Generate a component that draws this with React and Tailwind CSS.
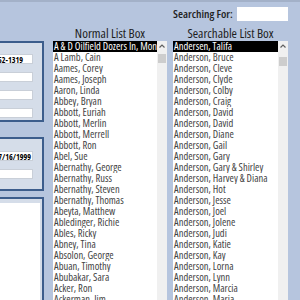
import React from "react";

const normalRows = [
	"A & D Oilfield Dozers In, Montana",
	"A Lamb, Cain",
	"Aames, Corey",
	"Aames, Joseph",
	"Aaron, Linda",
	"Abbey, Bryan",
	"Abbott, Euriah",
	"Abbott, Merlin",
	"Abbott, Merrell",
	"Abbott, Ron",
	"Abel, Sue",
	"Abernathy, George",
	"Abernathy, Russ",
	"Abernathy, Steven",
	"Abernathy, Thomas",
	"Abeyta, Matthew",
	"Abledinger, Richie",
	"Ables, Ricky",
	"Abney, Tina",
	"Absolon, George",
	"Abuan, Timothy",
	"Abubakar, Sara",
	"Acker, Ron",
	"Ackerman, Jim",
];

const searchRows = [
	"Andersen, Talifa",
	"Anderson, Bruce",
	"Anderson, Cleve",
	"Anderson, Clyde",
	"Anderson, Colby",
	"Anderson, Craig",
	"Anderson, David",
	"Anderson, David",
	"Anderson, Diane",
	"Anderson, Gail",
	"Anderson, Gary",
	"Anderson, Gary & Shirley",
	"Anderson, Harvey & Diana",
	"Anderson, Hot",
	"Anderson, Jesse",
	"Anderson, Joel",
	"Anderson, Jolene",
	"Anderson, Judi",
	"Anderson, Katie",
	"Anderson, Kay",
	"Anderson, Lorna",
	"Anderson, Lynn",
	"Anderson, Marcia",
	"Anderson, Maria",
];

const TextBox = ({ value, pad }) => (
	<div className={`ml-auto mr-[9px] w-[44px] h-[10px] bg-white border border-[#c9cfd8] overflow-hidden flex justify-end items-center ${pad}`}>
		<span className="whitespace-nowrap font-bold font-stretch-condensed text-[8px] leading-[9px] text-black">{value}</span>
	</div>
);

const ListBox = ({ rows, thumbTop }) => (
	<div className="flex h-[259px] bg-white">
		<div className="flex-1 min-w-0 overflow-hidden font-stretch-semi-condensed">
			{rows.map((row, i) => (
				<div
					key={i}
					className={`h-[11px] pl-[1px] whitespace-nowrap overflow-hidden text-[10.5px] leading-[11px] ${
						i === 0 ? "bg-black text-white" : "text-[#434343]"
					}`}>
					{row}
				</div>
			))}
		</div>
		<div className="w-[10px] bg-[#f0f0f0] flex flex-col items-center">
			<svg width="8" height="8" viewBox="0 0 8 8" className="mt-[1px]">
				<path d="M1.5 5.5 L4 3 L6.5 5.5" stroke="#606060" strokeWidth="1.2" fill="none" />
			</svg>
			<div className={`w-[8px] h-[9px] bg-[#cdcdcd] ${thumbTop}`} />
		</div>
	</div>
);

export default function App() {
	return (
		<div className="w-[300px] h-[300px] overflow-hidden bg-[#b6c5de] border-t-2 border-[#a3b1c8] flex items-start font-['Open_Sans',sans-serif]">
			{/* left forms */}
			<div className="w-[47px] shrink-0 pt-[39px] flex flex-col">
				<div className="-ml-[18px] w-[62px] h-[81px] border-2 border-[#3c5d8c] bg-[#d5dde9] pt-[11px] flex flex-col gap-[8px]">
					<TextBox value="(555) 552-1319" pad="pr-[9px]" />
					<TextBox value="" />
					<TextBox value="" />
					<TextBox value="" />
				</div>
				<div className="-ml-[18px] mt-[15px] w-[62px] h-[54px] border-2 border-[#3c5d8c] bg-[#d5dde9] pt-[12px] flex flex-col gap-[8px]">
					<TextBox value="7/16/1999" pad="pr-[1px]" />
					<TextBox value="" />
				</div>
				<div className="-ml-[18px] mt-[6px] w-[62px] h-[120px] border-2 border-[#3c5d8c] bg-[#d5dde9] pt-[4px]">
					<div className="ml-auto mr-[2px] w-[56px] h-[110px] bg-white" />
				</div>
			</div>

			{/* normal list */}
			<div className="ml-[6px] w-[114px] shrink-0 pt-[24px] flex flex-col">
				<div className="h-[15px] text-center text-[13px] leading-[15px] font-stretch-semi-condensed text-[#1d1d1d]">Normal List Box</div>
				<ListBox rows={normalRows} thumbTop="mt-[4px]" />
			</div>

			{/* searchable list */}
			<div className="ml-[6px] w-[115px] shrink-0 flex flex-col">
				<div className="mt-[5px] h-[14px] flex items-center justify-end">
					<span className="whitespace-nowrap text-[11.5px] leading-[14px] font-semibold font-stretch-condensed text-[#222] mr-[4px]">Searching For:</span>
					<div className="w-[52px] h-[14px] bg-white" />
				</div>
				<div className="mt-[5px] h-[15px] text-center text-[13px] leading-[15px] font-stretch-semi-condensed text-[#1d1d1d]">Searchable List Box</div>
				<ListBox rows={searchRows} thumbTop="mt-[7px]" />
			</div>
		</div>
	);
}
